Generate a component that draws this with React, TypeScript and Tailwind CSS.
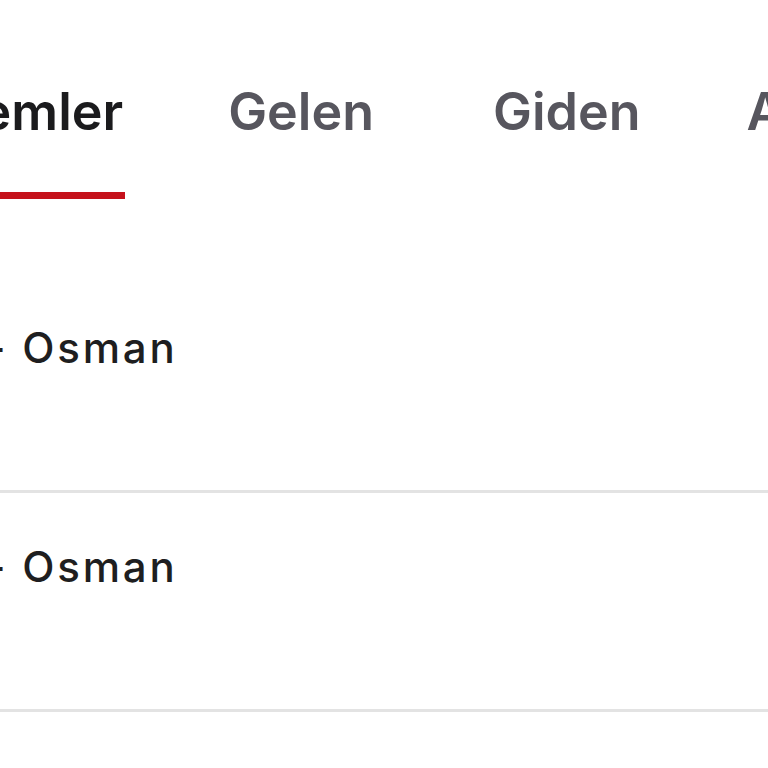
import React from 'react';

const tabs = [
    { label: 'İşlemler', active: true, ml: 'ml-[-76px]' },
    { label: 'Gelen', active: false, ml: 'ml-[105px]' },
    { label: 'Giden', active: false, ml: 'ml-[119px]' },
    { label: 'Aktarımlar', active: false, ml: 'ml-[106px]' },
];

const rows = ['- Osman', '- Osman', '- Osman'];

var App = () => {
    return (
        <div className="w-[768px] h-[768px] overflow-hidden bg-white font-['Inter',sans-serif]">
            {/* tab bar */}
            <div className="flex whitespace-nowrap">
                {tabs.map((t) => (
                    <div key={t.label} className={`flex flex-col shrink-0 pt-[86px] ${t.ml}`}>
                        <span className={`text-[52px] leading-none font-semibold tracking-[0px] ${t.active ? 'text-[#1b1b1d]' : 'text-[#57565e]'}`}>
                            {t.label}
                        </span>
                        <div className={`mt-[54px] h-[7px] mr-[-2px] ${t.active ? 'bg-[#c5111b]' : 'bg-transparent'}`}></div>
                    </div>
                ))}
            </div>

            {/* list */}
            <div className="mt-[75px]">
                {rows.map((r, i) => (
                    <div key={i} className="pt-[53px] pb-[121px] border-b-[3px] border-[#e3e3e3] whitespace-nowrap">
                        <span className="ml-[-14px] text-[42px] leading-none font-medium tracking-[2.8px] text-[#1e1e20]">{r}</span>
                    </div>
                ))}
            </div>
        </div>
    );
};

export default App;
